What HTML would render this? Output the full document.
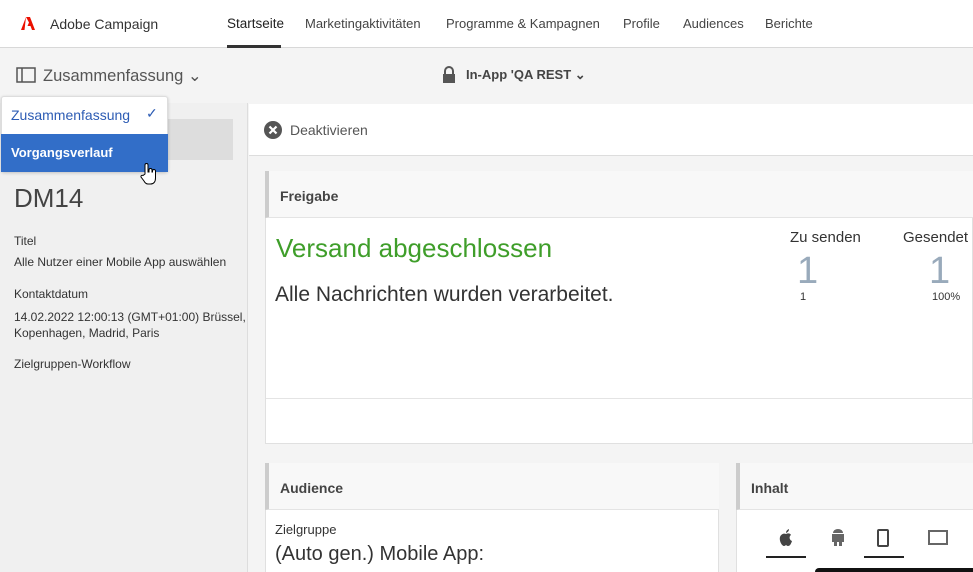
<!DOCTYPE html>
<html><head><meta charset="utf-8"><style>
*{margin:0;padding:0;box-sizing:border-box}
html,body{width:973px;height:572px;overflow:hidden}
body{font-family:"Liberation Sans",sans-serif;background:#f4f4f4;position:relative;color:#333}
.a{position:absolute;white-space:nowrap}
.n{font-size:13px;color:#444}
</style></head><body>
<div class="a" style="left:0;top:0;width:973px;height:48px;background:#fff;border-bottom:1px solid #d8d8d8"></div>
<svg class="a" style="left:21px;top:17px" width="14" height="13" viewBox="0 0 14 13"><path d="M5 0H9L14 13H11L9.5 9H6.5L8 5.5ZM5 0L0 13H3.5Z" fill="#eb1000"/></svg>
<div class="a" style="left:50px;top:16px;font-size:14px;color:#333">Adobe Campaign</div>
<div class="a n" style="left:227px;top:16px;font-size:13.5px;color:#222">Startseite</div>
<div class="a" style="left:227px;top:45px;width:54px;height:3px;background:#333"></div>
<div class="a n" style="left:305px;top:16px;font-size:13px">Marketingaktivitäten</div>
<div class="a n" style="left:446px;top:16px;font-size:13px">Programme &amp; Kampagnen</div>
<div class="a n" style="left:623px;top:16px;font-size:13px">Profile</div>
<div class="a n" style="left:683px;top:16px;font-size:13px">Audiences</div>
<div class="a n" style="left:765px;top:16px;font-size:13px">Berichte</div>
<svg class="a" style="left:16px;top:67px" width="20" height="16"><rect x="1" y="1" width="18" height="14" fill="none" stroke="#555" stroke-width="1.5"/><line x1="6" y1="1" x2="6" y2="15" stroke="#555" stroke-width="1.5"/></svg>
<div class="a" style="left:43px;top:66px;font-size:16.5px;color:#555">Zusammenfassung ⌄</div>
<svg class="a" style="left:442px;top:66px" width="14" height="17"><path d="M3 8V5a4 4 0 0 1 8 0v3" fill="none" stroke="#555" stroke-width="2"/><rect x="1" y="8" width="12" height="9" fill="#555"/></svg>
<div class="a" style="left:466px;top:67px;font-size:13px;font-weight:bold;color:#444">In-App 'QA REST ⌄</div>
<div class="a" style="left:0;top:103px;width:248px;height:469px;background:#f0f0f0;border-right:1px solid #ddd"></div>
<div class="a" style="left:10px;top:119px;width:223px;height:41px;background:#ddd"></div>
<div class="a" style="left:14px;top:183px;font-size:26px;color:#444">DM14</div>
<div class="a" style="left:14px;top:234px;font-size:12px">Titel</div>
<div class="a" style="left:14px;top:255px;font-size:12px">Alle Nutzer einer Mobile App auswählen</div>
<div class="a" style="left:14px;top:287px;font-size:12px">Kontaktdatum</div>
<div class="a" style="left:14px;top:309px;font-size:12px;line-height:16px">14.02.2022 12:00:13 (GMT+01:00) Brüssel,<br>Kopenhagen, Madrid, Paris</div>
<div class="a" style="left:14px;top:357px;font-size:12px">Zielgruppen-Workflow</div>
<div class="a" style="left:1px;top:96px;width:167px;height:76px;background:#fff;border:1px solid #ddd;border-radius:3px;box-shadow:0 1px 3px rgba(0,0,0,.2)"></div>
<div class="a" style="left:11px;top:107px;font-size:14px;color:#2d5cb4">Zusammenfassung</div>
<div class="a" style="left:146px;top:105px;font-size:14px;color:#2d5cb4">✓</div>
<div class="a" style="left:1px;top:134px;width:167px;height:38px;background:#326ec8"></div>
<div class="a" style="left:11px;top:145px;font-size:13px;font-weight:bold;color:#fff">Vorgangsverlauf</div>
<svg class="a" style="left:140px;top:162px" width="18" height="24" viewBox="0 0 18 24"><path d="M5 12V3a1.5 1.5 0 0 1 3 0v7h1V8a1.5 1.5 0 0 1 3 0v2h.5V9a1.5 1.5 0 0 1 3 0v7c0 4-2 6-5 6H8c-2 0-3-1-4-3l-3-4a1.3 1.3 0 0 1 2-1.5z" fill="#fff" stroke="#000" stroke-width="1"/></svg>
<div class="a" style="left:249px;top:104px;width:724px;height:52px;background:#fff;border-bottom:1px solid #ddd"></div>
<svg class="a" style="left:264px;top:121px" width="18" height="18"><circle cx="9" cy="9" r="9" fill="#555"/><path d="M5.5 5.5l7 7M12.5 5.5l-7 7" stroke="#fff" stroke-width="2.2"/></svg>
<div class="a" style="left:290px;top:122px;font-size:14px;color:#555">Deaktivieren</div>
<div class="a" style="left:265px;top:171px;width:708px;height:273px;background:#fff;border:1px solid #e0e0e0"></div>
<div class="a" style="left:265px;top:171px;width:708px;height:47px;background:#f8f8f8;border-left:4px solid #ccc;border-bottom:1px solid #e4e4e4"></div>
<div class="a" style="left:280px;top:188px;font-size:14px;font-weight:bold;color:#444">Freigabe</div>
<div class="a" style="left:276px;top:233px;font-size:26px;color:#3f9e2a">Versand abgeschlossen</div>
<div class="a" style="left:275px;top:283px;font-size:21px;color:#333">Alle Nachrichten wurden verarbeitet.</div>
<div class="a" style="left:790px;top:229px;font-size:15px">Zu senden</div>
<div class="a" style="left:903px;top:229px;font-size:15px">Gesendet</div>
<div class="a" style="left:797px;top:250px;font-size:38px;color:#9ab">1</div>
<div class="a" style="left:929px;top:250px;font-size:38px;color:#9ab">1</div>
<div class="a" style="left:800px;top:291px;font-size:11px">1</div>
<div class="a" style="left:932px;top:291px;font-size:11px">100%</div>
<div class="a" style="left:266px;top:398px;width:707px;height:1px;background:#e4e4e4"></div>
<div class="a" style="left:265px;top:463px;width:454px;height:120px;background:#fff;border:1px solid #e0e0e0"></div>
<div class="a" style="left:265px;top:463px;width:454px;height:47px;background:#f8f8f8;border-left:4px solid #ccc;border-bottom:1px solid #e4e4e4"></div>
<div class="a" style="left:280px;top:480px;font-size:14px;font-weight:bold;color:#444">Audience</div>
<div class="a" style="left:275px;top:522px;font-size:13px">Zielgruppe</div>
<div class="a" style="left:275px;top:543px;font-size:20px">(Auto gen.) Mobile App:</div>
<div class="a" style="left:736px;top:463px;width:240px;height:120px;background:#fff;border:1px solid #e0e0e0"></div>
<div class="a" style="left:736px;top:463px;width:240px;height:47px;background:#f8f8f8;border-left:4px solid #ccc;border-bottom:1px solid #e4e4e4"></div>
<div class="a" style="left:751px;top:480px;font-size:14px;font-weight:bold;color:#444">Inhalt</div>
<svg class="a" style="left:778px;top:529px" width="16" height="18" viewBox="0 0 16 18"><path d="M8 5c2-1 4-1 5 1-2 1-2 5 1 6-1 3-2 5-4 5-1 0-2-1-2-1s-1 1-2 1c-2 0-5-5-4-9 1-3 4-4 6-3z" fill="#444"/><path d="M8 4c0-2 1-3 3-4 0 2-1 3-3 4z" fill="#444"/></svg>
<svg class="a" style="left:830px;top:529px" width="16" height="18"><rect x="2" y="5" width="12" height="8" fill="#666"/><path d="M3 4a5 4 0 0 1 10 0z" fill="#666"/><rect x="4" y="13" width="3" height="4" fill="#666"/><rect x="9" y="13" width="3" height="4" fill="#666"/></svg>
<svg class="a" style="left:877px;top:529px" width="12" height="18"><rect x="1" y="1" width="10" height="16" rx="1" fill="none" stroke="#444" stroke-width="2"/></svg>
<svg class="a" style="left:928px;top:530px" width="20" height="16"><rect x="1" y="1" width="18" height="13" fill="none" stroke="#666" stroke-width="2"/></svg>
<div class="a" style="left:766px;top:556px;width:40px;height:2px;background:#222"></div>
<div class="a" style="left:864px;top:556px;width:40px;height:2px;background:#222"></div>
<div class="a" style="left:815px;top:568px;width:158px;height:4px;background:#111;border-radius:10px 0 0 0"></div>
</body></html>
